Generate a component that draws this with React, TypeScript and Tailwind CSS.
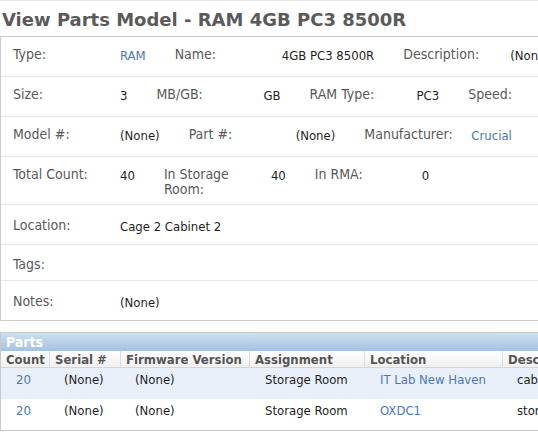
import React from "react";

type Cell = { label: string; value: string; link?: boolean };

const rows: { cells: Cell[]; h: string; pt: string }[] = [
  {
    h: "h-[40px]",
    pt: "pt-[10px]",
    cells: [
      { label: "Type:", value: "RAM", link: true },
      { label: "Name:", value: "4GB PC3 8500R" },
      { label: "Description:", value: "(None)" },
    ],
  },
  {
    h: "h-[40px]",
    pt: "pt-[10px]",
    cells: [
      { label: "Size:", value: "3" },
      { label: "MB/GB:", value: "GB" },
      { label: "RAM Type:", value: "PC3" },
      { label: "Speed:", value: "" },
    ],
  },
  {
    h: "h-[40px]",
    pt: "pt-[10px]",
    cells: [
      { label: "Model #:", value: "(None)" },
      { label: "Part #:", value: "(None)" },
      { label: "Manufacturer:", value: "Crucial", link: true },
    ],
  },
  {
    h: "h-[48px]",
    pt: "pt-[10px]",
    cells: [
      { label: "Total Count:", value: "40" },
      { label: "In Storage Room:", value: "40" },
      { label: "In RMA:", value: "0" },
    ],
  },
  {
    h: "h-[40px]",
    pt: "pt-[13px]",
    cells: [{ label: "Location:", value: "Cage 2 Cabinet 2" }],
  },
  { h: "h-[36px]", pt: "pt-[12px]", cells: [{ label: "Tags:", value: "" }] },
  { h: "h-[39px]", pt: "pt-[13px]", cells: [{ label: "Notes:", value: "(None)" }] },
];

const parts = [
  { count: "20", serial: "(None)", fw: "(None)", assign: "Storage Room", loc: "IT Lab New Haven", desc: "cables" },
  { count: "20", serial: "(None)", fw: "(None)", assign: "Storage Room", loc: "OXDC1", desc: "storage" },
];

const cols = "grid grid-cols-[49px_71px_129px_115px_138px_120px]";

export default function App() {
  return (
    <div className="w-[538px] h-[432px] overflow-hidden bg-white border-t border-[#e4e4e4] font-['DejaVu_Sans_Condensed','DejaVu_Sans',sans-serif]">
      {/* Title */}
      <h1 className="h-[35px] pl-[2px] pt-[8px] font-['DejaVu_Sans',sans-serif] text-[18px] leading-[22px] font-bold text-[#5a5a5a] whitespace-nowrap">
        View Parts Model - RAM 4GB PC3 8500R
      </h1>

      {/* Details box */}
      <div className="w-[600px] border border-[#cccccc]">
        {rows.map((row, i) => (
          <div
            key={i}
            className={`flex items-start ${row.h} ${row.pt} ${i < rows.length - 1 ? "border-b border-[#e6e6e6]" : ""}`}
          >
            {row.cells.map((c) => (
              <React.Fragment key={c.label}>
                <div className="w-[106px] shrink-0 pl-[12px] text-[14px] leading-[15px] text-[#595959]">
                  {c.label}
                </div>
                <div
                  className={`shrink-0 whitespace-nowrap pl-[13px] pr-[17px] pt-[1px] text-[13px] leading-[15px] ${
                    c.link ? "text-[#4a78b4]" : "text-[#1e1e1e]"
                  }`}
                >
                  {c.value}
                </div>
              </React.Fragment>
            ))}
          </div>
        ))}
      </div>

      {/* Parts */}
      <div className="mt-[11px] w-[600px] border border-[#c8c8c8]">
        <div className="h-[18px] pl-[5px] bg-gradient-to-b from-[#cddff0] to-[#a5c2e1] text-[14px] leading-[18px] font-bold text-white">
          Parts
        </div>
        <div className={`${cols} h-[17px] bg-gradient-to-b from-[#ffffff] to-[#f0f0f0] border-b border-[#d6d6d6] text-[13px] leading-[17px] font-bold text-[#555]`}>
          {["Count", "Serial #", "Firmware Version", "Assignment", "Location", "Description"].map((h, i) => (
            <div key={h} className={`pl-[5px] whitespace-nowrap ${i < 5 ? "border-r border-[#dcdcdc]" : ""}`}>
              {h}
            </div>
          ))}
        </div>
        {parts.map((p, i) => (
          <div
            key={i}
            className={`${cols} h-[31px] pt-[4px] text-[13px] leading-[15px] text-[#1e1e1e] ${
              i === 0 ? "bg-[#e9f0fa]" : "bg-white"
            }`}
          >
            <div className="pl-[15px] text-[#4a78b4]">{p.count}</div>
            <div className="pl-[14px]">{p.serial}</div>
            <div className="pl-[14px]">{p.fw}</div>
            <div className="pl-[15px] whitespace-nowrap">{p.assign}</div>
            <div className="pl-[15px] whitespace-nowrap text-[#4a78b4]">{p.loc}</div>
            <div className="pl-[14px] whitespace-nowrap">{p.desc}</div>
          </div>
        ))}
      </div>
    </div>
  );
}
